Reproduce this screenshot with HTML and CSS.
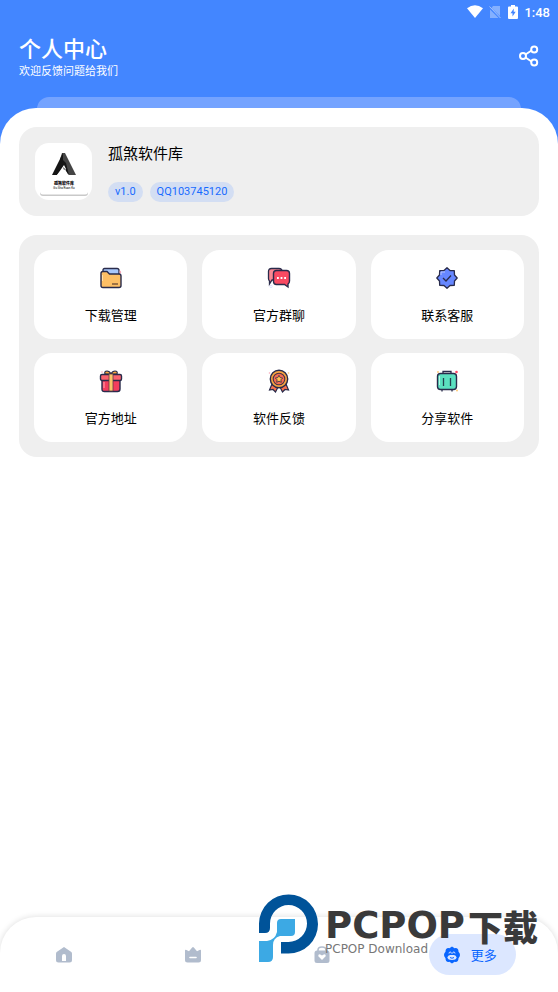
FILE: index.html
```html
<!DOCTYPE html>
<html lang="zh-CN">
<head>
<meta charset="utf-8">
<meta name="viewport" content="width=device-width, initial-scale=1">
<title>个人中心</title>
<link rel="stylesheet" href="styles.css">
</head>
<body>
<header class="header">
  <div class="status">
    <svg width="16" height="14" viewBox="0 0 16 14"><path d="M0 3.2Q8-2.6 16 3.2L8 13z" fill="#fff"/></svg>
    <svg width="12" height="14" viewBox="0 0 12 14"><path d="M4 1h7v10L2.500 3zM1 4.500 9.500 13H1z" fill="#fff" opacity=".35"/><path d="M.5 1.500l11 11.500" stroke="#fff" opacity=".5"/></svg>
    <svg class="battery" width="10" height="14" viewBox="0 0 10 14"><path d="M3 0h4v1.500h2q1 0 1 1V13q0 1-1 1H1q-1 0-1-1V2.500q0-1 1-1h2z" fill="#fff"/><path d="M5.800 3.500 2.500 8.300h2v3.200l3.200-4.800h-2z" fill="#4386ff"/></svg>
    <span>1:48</span>
  </div>
  <div class="heading">
    <div>
      <h1>个人中心</h1>
      <p>欢迎反馈问题给我们</p>
    </div>
    <button class="share" aria-label="分享">
      <svg width="20" height="22" viewBox="0 0 20 22" fill="none" stroke="#fff" stroke-width="2"><path d="M6.500 9.500 12.500 5.500M6.500 12.500l6 4"/><circle cx="4" cy="11" r="3"/><circle cx="15.200" cy="4.500" r="3"/><circle cx="15.200" cy="17.500" r="3"/></svg>
    </button>
  </div>
  <div class="ledge"></div>
</header>
<main class="sheet">
  <section class="profile">
    <div class="avatar">
      <svg width="48" height="49" viewBox="0 0 48 49"><rect x="0" y="2" width="48" height="47" rx="3" fill="#c9c9c9"/><rect x="0" y="0" width="48" height="47.500" rx="3" fill="#fff"/><path d="M22 6h3l11 22h-8l-3-7-5 2 3-6-3-5z" fill="#444"/><path d="M23 6 12 28h5l7-7 5 7-3-12-3-3z" fill="#151515"/><path d="m17 28 7-10 2 4-2 2 5 4z" fill="#fff"/><path d="m23 20 2 2-1 1z" fill="#222"/><text x="24" y="38" text-anchor="middle" class="avatar-name">孤煞软件库</text><text x="24" y="42" text-anchor="middle" class="avatar-sub">Gu Sha Ruan Ku</text></svg>
    </div>
    <div class="info">
      <h2>孤煞软件库</h2>
      <div class="tags"><span>v1.0</span><span>QQ103745120</span></div>
    </div>
  </section>
  <section class="tiles">
    <button>
      <svg width="24" height="24" viewBox="0 0 24 24"><path d="M4 10V4q0-1.500 1.500-1.500H18q2 0 2 2V10z" fill="#a9c8fb" stroke="#292b4b" stroke-width="1.300"/><path d="M20.500 4.500q2 0 1.500 3h-1.500z" fill="#f7a8b8"/><path d="M2 7.500q0-2 2-2h4L10.500 8H20q2 0 2 2v9.500q0 2-2 2H4q-2 0-2-2z" fill="#fdbf65" stroke="#292b4b" stroke-width="1.400"/><path d="M13 18h6" stroke="#6b4a32" stroke-width="1.300"/><path d="M3.500 9v6" stroke="#ffe1ae"/></svg>
      <span>下载管理</span>
    </button>
    <button>
      <svg width="24" height="24" viewBox="0 0 24 24"><path d="M1.500 5.500q0-3 3-3H12q3 0 3 3V14H5l-2.500 4V15q-1-1-1-2.500z" fill="#fa8992" stroke="#292b4b" stroke-width="1.300"/><path d="M9.500 4.500h10q3 0 3 3v7.500q0 2-1.500 3v3l-3.500-2.500h-8q-3 0-3-3v-8q0-3 3-3z" fill="#f94a62" stroke="#292b4b" stroke-width="1.400"/><path d="M10 12h1.800M13.600 12h1.800M17.200 12H19" stroke="#fff" stroke-width="1.800"/><circle cx="4" cy="20.500" r="1.200" fill="none" stroke="#dbe0ff" stroke-width=".8"/></svg>
      <span>官方群聊</span>
    </button>
    <button>
      <svg width="24" height="24" viewBox="0 0 24 24"><path d="m12 1.800 3 2.700 4.300.2.200 4.300 2.700 3-2.700 3-.2 4.300-4.300.2-3 2.700-3-2.700-4.300-.2-.2-4.300-2.700-3 2.700-3 .2-4.300L9 4.500z" fill="#6687ff" stroke="#292b4b" stroke-width="1.300" stroke-linejoin="round"/><path d="m8 12 3 3 5-5.500" fill="none" stroke="#292b4b" stroke-width="1.300"/><path d="M6 9V6h4" fill="none" stroke="#b9c8ff"/></svg>
      <span>联系客服</span>
    </button>
    <button>
      <svg width="24" height="24" viewBox="0 0 24 24"><path d="M6 5q-1-3 2-3 2.500 0 4 3 1.500-3 4-3 3 0 2 3z" fill="#f7a73c" stroke="#292b4b" stroke-width="1.200"/><path d="M3 10h18v10q0 2.500-2.500 2.500h-13Q3 22.500 3 20z" fill="#f33d5d" stroke="#292b4b" stroke-width="1.400"/><rect x="1.500" y="5.500" width="21" height="6" rx="1.500" fill="#fb626d" stroke="#292b4b" stroke-width="1.400"/><path d="M10 5h4v17h-4z" fill="#fbc56a" stroke="#633c45" stroke-width=".8"/><path d="M5 13v6" stroke="#ff99a4" stroke-width="1.200"/><circle cx="3" cy="3" r=".8" fill="#f7a8b8"/></svg>
      <span>官方地址</span>
    </button>
    <button>
      <svg width="24" height="24" viewBox="0 0 24 24"><path d="m5 15-2.500 6 3.500-.5L8.500 23l2.500-5zM19 15l2.500 6-3.500-.5-2.500 2.500-2.500-5z" fill="#f8714f" stroke="#292b4b" stroke-width="1.200"/><circle cx="12" cy="10" r="8.700" fill="#f7a43f" stroke="#292b4b" stroke-width="1.400"/><circle cx="12" cy="10" r="5.800" fill="#f76c51" stroke="#493148" stroke-width="1.100"/><path d="m12 6.300 1.200 2.300 2.500.4-1.800 1.800.4 2.500-2.300-1.100-2.300 1.100.4-2.500L8.300 9l2.500-.4z" fill="#ffc34e" stroke="#493148" stroke-width=".9"/><circle cx="2.500" cy="4" r=".8" fill="#f7a8b8"/><circle cx="21.500" cy="4" r=".8" fill="#ffc66d"/></svg>
      <span>软件反馈</span>
    </button>
    <button>
      <svg width="24" height="24" viewBox="0 0 24 24"><path d="M8 5V2.500h8V5M7 20v2.500M17 20v2.500" fill="none" stroke="#292b4b" stroke-width="1.300"/><rect x="2.500" y="4.500" width="19" height="16" rx="3" fill="#5be0c0" stroke="#292b4b" stroke-width="1.400"/><path d="M8.500 9v8M15.500 9v8" stroke="#23404f" stroke-width="1.300"/><path d="M4.500 7v9" stroke="#b8f7e6"/><circle cx="21.500" cy="3" r="1.300" fill="#ff4966"/><circle cx="3" cy="3" r=".9" fill="#ffc66d"/><circle cx="22" cy="21.500" r=".9" fill="#ffc66d"/></svg>
      <span>分享软件</span>
    </button>
  </section>
</main>
<nav class="nav">
  <a href="#home" aria-label="首页"><svg width="18" height="18" viewBox="0 0 18 18"><path d="m9 1 7 4.800q1 .7 1 2V14q0 2.500-2.500 2.500h-11Q1 16.500 1 14V7.800q0-1.300 1-2zM7 10v5h4v-5q0-2-2-2t-2 2z" fill="#b1bccd" fill-rule="evenodd"/></svg></a>
  <a href="#rank" aria-label="排行"><svg width="18" height="18" viewBox="0 0 18 18"><path d="M1 4.500q0-1.200 1.500-.5L5 5.300 8.200 1.500q.8-1 1.600 0L13 5.300 15.500 4Q17 3.300 17 4.500V14q0 2.500-2.500 2.500h-11Q1 16.500 1 14z" fill="#b1bccd"/><path d="M6 11.500h6" stroke="#fff" stroke-width="1.600" stroke-linecap="round"/></svg></a>
  <a href="#store" aria-label="应用"><svg width="18" height="18" viewBox="0 0 18 18"><path d="M5 5V4q0-3 4-3t4 3v1" fill="none" stroke="#b1bccd" stroke-width="1.600"/><rect x="1.500" y="4.500" width="15" height="12.500" rx="2.500" fill="#b1bccd"/><path d="m9 14-3.700-3.800q-.5-2 1.500-2L9 9.500l2.200-1.300q2 0 1.500 2z" fill="#fff"/></svg></a>
  <a class="more" href="#more"><svg width="18" height="18" viewBox="0 0 18 18"><path d="m9 .5 2.600 1.700q3.900-.7 3.900 3.600Q18.500 9 15.500 12.200q0 4.300-3.900 3.600L9 17.500l-2.600-1.700q-3.900.7-3.900-3.600Q-.5 9 2.500 5.800q0-4.300 3.900-3.600z" fill="#0a66ff"/><path d="M4.300 11.500Q5 9 7 9h4q2 0 2.700 2.500Q13 14 9 14t-4.700-2.500z" fill="#dce7ff"/><path d="M6 7.500Q6 6 7.200 6t1.200 1.500M9.600 7.500q0-1.500 1.200-1.500T12 7.500" fill="none" stroke="#dce7ff"/><path d="M7 11.500q2 1.500 4 0" fill="none" stroke="#0a66ff"/></svg><span>更多</span></a>
  <div class="brand">
    <svg width="59" height="68" viewBox="0 0 59 68"><path d="M0 39V29.500a29.500 29.500 0 1 1 29.500 30H22V48h7.500A18.500 18.500 0 1 0 11 29.500V34q0 5-5 5z" fill="#005399"/><path d="M22 25h14v13q0 4-4 4H21q-7 2-7 9v12q0 5-5 5H0V47h8q8-1 10-9V29q0-4 4-4z" fill="#3ca9e4"/></svg>
    <div><div class="brand-name"><span>PCPOP</span><span class="brand-cjk">下载</span></div><div class="brand-sub">PCPOP Download</div></div>
  </div>
</nav>
</body>
</html>
```
FILE: styles.css
```css
* { box-sizing: border-box; }
body {
  margin: 0;
  min-height: 100vh;
  display: flex;
  flex-direction: column;
  background: #fff;
  color: #000;
  font-family: Roboto, "Noto Sans CJK SC", sans-serif;
}
h1, h2, p { margin: 0; }
button { border: 0; padding: 0; font: inherit; color: inherit; cursor: pointer; }
a { color: inherit; text-decoration: none; }
svg { display: block; flex: none; }

.header { background: #4386ff; color: #fff; padding-bottom: 36px; }
.status {
  display: flex;
  justify-content: flex-end;
  align-items: center;
  gap: 6px;
  height: 24px;
  padding-right: 8px;
  font-size: 13px;
  font-weight: 500;
}
.battery { margin-left: 1px; }
.heading {
  display: flex;
  justify-content: space-between;
  align-items: center;
  height: 64px;
  padding: 0 19px;
}
.heading h1 { padding-top: 6px; font-size: 22px; line-height: 26px; font-weight: 500; }
.heading p { font-size: 11px; line-height: 18px; }
.share { background: none; }
.ledge {
  height: 12px;
  margin: 9px 37px 0;
  border-radius: 18px 18px 0 0;
  background: #74a3ff;
}

.sheet {
  margin-top: -37px;
  padding: 19px;
  border-radius: 36px 36px 0 0;
  background: #fff;
}
.profile {
  display: flex;
  gap: 16px;
  padding: 16px;
  border-radius: 18px;
  background: #efefef;
}
.avatar {
  display: grid;
  place-items: center;
  width: 57px;
  height: 57px;
  border-radius: 14px;
  background: #fff;
}
.avatar-name { font-size: 4px; font-weight: 900; }
.avatar-sub { font-size: 3px; }
.info { display: flex; flex-direction: column; justify-content: space-between; margin-bottom: -2px; }
.info h2 { font-size: 15px; line-height: 22px; font-weight: 400; }
.tags { display: flex; gap: 7px; }
.tags span {
  padding: 0 7px;
  border-radius: 10px;
  background: #d3def3;
  color: #176bff;
  font-size: 11px;
  line-height: 20px;
}
.tiles {
  display: grid;
  grid-template-columns: repeat(3, 1fr);
  gap: 14px 15px;
  margin-top: 19px;
  padding: 15px;
  border-radius: 18px;
  background: #efefef;
}
.tiles button {
  display: flex;
  flex-direction: column;
  align-items: center;
  gap: 16px;
  padding: 16px 0 13px;
  border-radius: 18px;
  background: #fff;
  font-size: 13px;
  line-height: 20px;
}

.nav {
  position: relative;
  display: grid;
  grid-template-columns: 3fr 3fr 3fr 4fr;
  place-items: center;
  height: 75px;
  margin-top: auto;
  border-radius: 36px 36px 0 0;
  background: #fff;
  box-shadow: 0 0 6px rgba(0, 0, 0, .14);
}
.more {
  display: flex;
  align-items: center;
  gap: 10px;
  height: 41px;
  padding: 0 19px 0 14px;
  border-radius: 21px;
  background: #dce7ff;
  color: #0a66ff;
  font-size: 13px;
}
.brand {
  position: absolute;
  right: 20px;
  top: -23px;
  display: flex;
  gap: 7px;
  pointer-events: none;
  color: #3a3a3a;
}
.brand-name {
  display: flex;
  gap: 3px;
  height: 32px;
  margin-top: 17px;
  font: 700 37px/30px "DejaVu Sans", sans-serif;
}
.brand-cjk { font: 900 35px/30px "Noto Sans CJK SC", sans-serif; }
.brand-sub { font: 12px/12px "DejaVu Sans", sans-serif; color: #777; }
```
